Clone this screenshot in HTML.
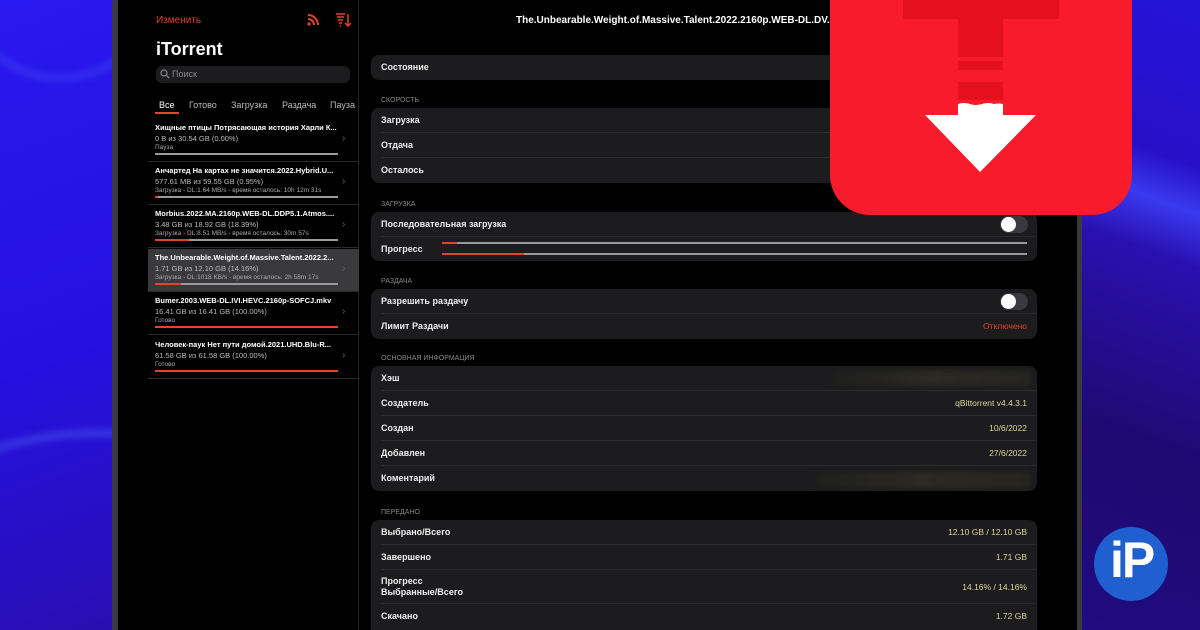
<!DOCTYPE html>
<html style="width:1200px;height:630px;overflow:hidden"><head><meta charset="utf-8"><style>
*{margin:0;padding:0;box-sizing:border-box}
body{width:1200px;height:630px;overflow:hidden;position:relative;font-family:"Liberation Sans","DejaVu Sans",sans-serif;background:#2414e0}
#w{position:absolute;left:0;top:0;width:1200px;height:630px;overflow:hidden;background:linear-gradient(160deg,#2a18f0 0%,#2410e0 35%,#2a0fb8 60%,#1e0a6a 85%,#190858 100%)}
.streak{position:absolute;border-radius:50%;}
.dev{position:absolute;left:112px;top:-40px;width:970px;height:720px;background:#3a3a3e;border-radius:48px;}
.scr{position:absolute;left:118px;top:-40px;width:959px;height:720px;background:#000;border-radius:44px;overflow:hidden}
.t{position:absolute;white-space:nowrap;color:#fff}
.side{position:absolute;left:148px;top:0;width:211px;height:630px;background:#000;border-right:1px solid #222}
.item{position:absolute;left:148px;width:211px;height:43px;border-bottom:1px solid #2a2a2a}
.item .a{position:absolute;left:7px;top:4px;font-size:7.5px;font-weight:bold;color:#fff}
.item .b{position:absolute;left:7px;top:15px;font-size:7.5px;color:#bbb}
.item .c{position:absolute;left:7px;top:25px;font-size:6.5px;color:#aaa}
.item .bar{position:absolute;left:7px;top:34px;width:183px;height:2px;background:#9a9a9a}
.item .bar i{position:absolute;left:0;top:0;height:2px;background:#e0442c}
.item .ch{position:absolute;left:194px;top:14px;font-size:10px;color:#666}
.card{position:absolute;left:371px;width:666px;background:#1c1c1e;border-radius:8px}
.row{position:relative;height:25px;border-bottom:1px solid #2c2c2e;margin-left:10px;padding-right:10px}
.row:last-child{border-bottom:none}
.row .l{position:absolute;left:0;top:7px;font-size:9px;font-weight:bold;color:#eee}
.row .v{position:absolute;right:10px;top:7px;font-size:8.5px;color:#dcd69a}
.hd{position:absolute;left:381px;font-size:7px;color:#888}
.blur{position:absolute;background:linear-gradient(90deg,#1f1f1d,#2c2a22 50%,#262520);filter:blur(2px)}
</style></head><body><div id="w">
<div class="streak" style="left:-200px;top:430px;width:600px;height:500px;border:6px solid rgba(90,120,255,.5);filter:blur(4px)"></div>
<div class="streak" style="left:-40px;top:-120px;width:200px;height:200px;border:4px solid rgba(90,140,255,.4);filter:blur(4px)"></div>
<div style="position:absolute;left:1082px;top:0;width:118px;height:630px;background:linear-gradient(200deg,#2414d8 0%,#2810c8 25%,#3a3af0 32%,#2a10b0 40%,#1e0a70 70%,#200b80 100%)"></div>
<div class="dev"></div>
<div class="scr"></div>
<div class="side"></div>
<div class="t" style="left:156px;top:15px;font-size:10px;color:#e0442c">Изменить</div>
<svg style="position:absolute;left:307px;top:14px" width="12" height="12" viewBox="0 0 12 12"><circle cx="2" cy="10" r="1.6" fill="#e0442c"/><path d="M1 5a6 6 0 0 1 6 6M1 1a10 10 0 0 1 10 10" stroke="#e0442c" stroke-width="2" fill="none"/></svg>
<svg style="position:absolute;left:336px;top:13px" width="15" height="14" viewBox="0 0 15 14"><path d="M0 1h9M1 4h7M2 7h5M3 10h3M4 13h1M12 1v12M9 10l3 3 3-3" stroke="#e0442c" stroke-width="1.5" fill="none"/></svg>
<div class="t" style="left:156px;top:39px;font-size:18px;font-weight:bold">iTorrent</div>
<div style="position:absolute;left:156px;top:66px;width:194px;height:17px;background:#1c1c1e;border-radius:6px"></div>
<svg style="position:absolute;left:160px;top:69px" width="10" height="10" viewBox="0 0 10 10"><circle cx="4" cy="4" r="3" stroke="#888" stroke-width="1.2" fill="none"/><path d="M6.2 6.2l3 3" stroke="#888" stroke-width="1.2"/></svg>
<div class="t" style="left:172px;top:69px;font-size:9px;color:#888">Поиск</div>
<div class="t" style="left:159px;top:100px;font-size:9px">Все</div>
<div class="t" style="left:189px;top:100px;font-size:9px;color:#bbb">Готово</div>
<div class="t" style="left:231px;top:100px;font-size:9px;color:#bbb">Загрузка</div>
<div class="t" style="left:282px;top:100px;font-size:9px;color:#bbb">Раздача</div>
<div class="t" style="left:330px;top:100px;font-size:9px;color:#bbb">Пауза</div>
<div style="position:absolute;left:155px;top:112px;width:24px;height:2px;background:#e0442c"></div>

<div class="item" style="top:119px"><div class="a">Хищные птицы Потрясающая история Харли К...</div><div class="b">0 B из 30.54 GB (0.00%)</div><div class="c">Пауза</div><div class="ch">›</div><div class="bar"></div></div>
<div class="item" style="top:162px"><div class="a">Анчартед На картах не значится.2022.Hybrid.U...</div><div class="b">577.61 MB из 59.55 GB (0.95%)</div><div class="c">Загрузка - DL:1.64 MB/s - время осталось: 10h 12m 31s</div><div class="ch">›</div><div class="bar"><i style="width:3px"></i></div></div>
<div class="item" style="top:205px"><div class="a">Morbius.2022.MA.2160p.WEB-DL.DDP5.1.Atmos....</div><div class="b">3.48 GB из 18.92 GB (18.39%)</div><div class="c">Загрузка - DL:8.51 MB/s - время осталось: 30m 57s</div><div class="ch">›</div><div class="bar"><i style="width:34px"></i></div></div>
<div class="item" style="top:249px;background:#3a3a3c"><div class="a">The.Unbearable.Weight.of.Massive.Talent.2022.2...</div><div class="b">1.71 GB из 12.10 GB (14.16%)</div><div class="c">Загрузка - DL:1018 KB/s - время осталось: 2h 58m 17s</div><div class="ch">›</div><div class="bar"><i style="width:26px"></i></div></div>
<div class="item" style="top:292px"><div class="a">Bumer.2003.WEB-DL.IVI.HEVC.2160p-SOFCJ.mkv</div><div class="b">16.41 GB из 16.41 GB (100.00%)</div><div class="c">Готово</div><div class="ch">›</div><div class="bar"><i style="width:183px"></i></div></div>
<div class="item" style="top:336px"><div class="a">Человек-паук Нет пути домой.2021.UHD.Blu-R...</div><div class="b">61.58 GB из 61.58 GB (100.00%)</div><div class="c">Готово</div><div class="ch">›</div><div class="bar"><i style="width:183px"></i></div></div>

<div class="t" style="left:516px;top:15px;font-size:10px;font-weight:bold">The.Unbearable.Weight.of.Massive.Talent.2022.2160p.WEB-DL.DV.x26</div>

<div class="card" style="top:55px"><div class="row"><div class="l">Состояние</div></div></div>
<div class="hd" style="top:97px">СКОРОСТЬ</div>
<div class="card" style="top:108px"><div class="row"><div class="l">Загрузка</div></div><div class="row"><div class="l">Отдача</div></div><div class="row"><div class="l">Осталось</div></div></div>
<div class="hd" style="top:201px">ЗАГРУЗКА</div>
<div class="card" style="top:212px;height:49px"><div class="row"><div class="l">Последовательная загрузка</div></div><div class="row"><div class="l">Прогресс</div></div></div>
<div style="position:absolute;left:1000px;top:216px;width:28px;height:17px;border-radius:9px;background:#39393d"><div style="position:absolute;left:1px;top:1px;width:15px;height:15px;border-radius:50%;background:#fff"></div></div>
<div style="position:absolute;left:442px;top:242px;width:585px;height:2px;background:#9a9a9a"><i style="position:absolute;left:0;top:0;width:15px;height:2px;background:#e0442c"></i></div>
<div style="position:absolute;left:442px;top:253px;width:585px;height:2px;background:#9a9a9a"><i style="position:absolute;left:0;top:0;width:82px;height:2px;background:#e0442c"></i></div>
<div class="hd" style="top:278px">РАЗДАЧА</div>
<div class="card" style="top:289px"><div class="row"><div class="l">Разрешить раздачу</div></div><div class="row"><div class="l">Лимит Раздачи</div><div class="v" style="color:#e0442c">Отключено</div></div></div>
<div style="position:absolute;left:1000px;top:293px;width:28px;height:17px;border-radius:9px;background:#39393d"><div style="position:absolute;left:1px;top:1px;width:15px;height:15px;border-radius:50%;background:#fff"></div></div>
<div class="hd" style="top:355px">ОСНОВНАЯ ИНФОРМАЦИЯ</div>
<div class="card" style="top:366px"><div class="row"><div class="l">Хэш</div></div><div class="row"><div class="l">Создатель</div><div class="v">qBittorrent v4.4.3.1</div></div><div class="row"><div class="l">Создан</div><div class="v">10/6/2022</div></div><div class="row"><div class="l">Добавлен</div><div class="v">27/6/2022</div></div><div class="row"><div class="l">Коментарий</div></div></div>
<div class="blur" style="left:833px;top:371px;width:197px;height:15px"></div>
<div class="blur" style="left:815px;top:472px;width:215px;height:16px"></div>
<div class="hd" style="top:509px">ПЕРЕДАНО</div>
<div class="card" style="top:520px;height:120px"><div class="row"><div class="l">Выбрано/Всего</div><div class="v">12.10 GB / 12.10 GB</div></div><div class="row"><div class="l">Завершено</div><div class="v">1.71 GB</div></div><div class="row" style="height:34px"><div class="l" style="top:6px;line-height:11px">Прогресс<br>Выбранные/Всего</div><div class="v" style="top:12px">14.16% / 14.16%</div></div><div class="row"><div class="l">Скачано</div><div class="v">1.72 GB</div></div></div>

<div style="position:absolute;left:830px;top:-40px;width:302px;height:255px;background:#f81b2b;border-radius:40px"></div>
<div style="position:absolute;left:903px;top:0;width:156px;height:19px;background:#e4101d"></div>
<div style="position:absolute;left:958px;top:19px;width:45px;height:38px;background:#e4101d"></div>
<div style="position:absolute;left:958px;top:61px;width:45px;height:9px;background:#e4101d"></div>
<div style="position:absolute;left:958px;top:82px;width:45px;height:18px;background:#e4101d"></div>
<svg style="position:absolute;left:925px;top:100px" width="112" height="73" viewBox="0 0 112 73"><path d="M33 4q6-2 12 0 5 2 12 0 6-2 12 0 5-1 9 0V15H111L55 72 0 15H33z" fill="#fff"/></svg>

<div style="position:absolute;left:1094px;top:527px;width:74px;height:74px;border-radius:50%;background:#1f5fcf"></div>
<div class="t" style="left:1110px;top:531px;font-size:50px;font-weight:bold;letter-spacing:-2px;font-family:'Liberation Sans',sans-serif">iP</div>
</div></body></html>
